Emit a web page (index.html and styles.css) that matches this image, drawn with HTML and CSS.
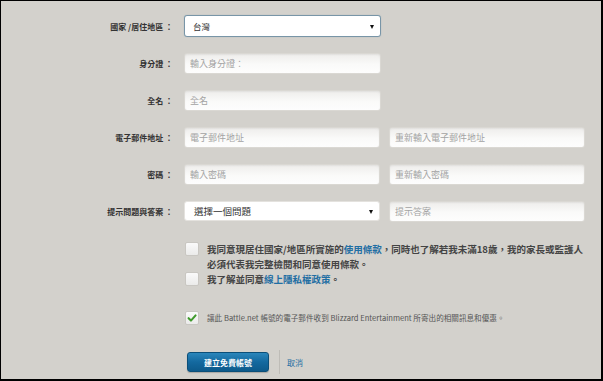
FILE: index.html
```html
<!DOCTYPE html>
<html lang="zh-Hant">
<head>
<meta charset="utf-8">
<title>建立帳號</title>
<link rel="stylesheet" href="styles.css">
</head>
<body>
<div class="frame">
  <form class="form">
    <div class="row">
      <label class="label">國家 /居住地區 ：</label>
      <div class="fields">
        <div class="select focus"><span class="select-text">台灣</span><span class="arrow"></span></div>
      </div>
    </div>
    <div class="row">
      <label class="label">身分證 ：</label>
      <div class="fields">
        <input class="input" type="text" placeholder="輸入身分證：">
      </div>
    </div>
    <div class="row">
      <label class="label">全名 ：</label>
      <div class="fields">
        <input class="input" type="text" placeholder="全名">
      </div>
    </div>
    <div class="row">
      <label class="label">電子郵件地址 ：</label>
      <div class="fields two">
        <input class="input" type="text" placeholder="電子郵件地址">
        <input class="input" type="text" placeholder="重新輸入電子郵件地址">
      </div>
    </div>
    <div class="row">
      <label class="label">密碼 ：</label>
      <div class="fields two">
        <input class="input" type="password" placeholder="輸入密碼">
        <input class="input" type="password" placeholder="重新輸入密碼">
      </div>
    </div>
    <div class="row">
      <label class="label">提示問題與答案 ：</label>
      <div class="fields two">
        <div class="select plain"><span class="select-text">選擇一個問題</span><span class="arrow"></span></div>
        <input class="input" type="text" placeholder="提示答案">
      </div>
    </div>

    <div class="checks">
      <div class="check-item">
        <span class="box"></span>
        <p class="check-text">我同意現居住國家/地區所實施的<a class="link">使用條款</a>，同時也了解若我未滿18歲，我的家長或監護人必須代表我完整檢閱和同意使用條款。</p>
      </div>
      <div class="check-item">
        <span class="box"></span>
        <p class="check-text">我了解並同意<a class="link">線上隱私權政策</a>。</p>
      </div>
      <div class="check-item small">
        <span class="box checked"><svg viewBox="0 0 14 14" width="14" height="14"><path d="M3 7.2 L5.8 10 L11.2 4" fill="none" stroke="#3f9a2c" stroke-width="2.4" stroke-linecap="round" stroke-linejoin="round"/></svg></span>
        <p class="check-text">讓此 Battle.net 帳號的電子郵件收到 Blizzard Entertainment 所寄出的相關訊息和優惠。</p>
      </div>
    </div>

    <div class="actions">
      <button type="button" class="btn">建立免費帳號</button>
      <span class="divider"></span>
      <a class="cancel">取消</a>
    </div>
  </form>
</div>
</body>
</html>
```
FILE: styles.css
```css
* { box-sizing: border-box; }
html, body {
  margin: 0;
  padding: 0;
  background: #d3d1cc;
}
body {
  font-family: "Noto Sans CJK TC", "Liberation Sans", sans-serif;
  color: #333;
}
.frame {
  width: 603px;
  height: 381px;
  border-style: solid;
  border-color: #000;
  border-width: 1px 2px 2px 1px;
  background: #d3d1cc;
  padding-top: 14px;
  overflow: hidden;
}
.form {
  display: flex;
  flex-direction: column;
}
.row {
  display: grid;
  grid-template-columns: 172px 1fr;
  column-gap: 11px;
  align-items: center;
  margin-bottom: 16px;
}
.label {
  text-align: right;
  font-size: 8px;
  font-weight: bold;
  color: #333;
  white-space: nowrap;
}
.fields {
  display: flex;
  gap: 9px;
}
.input {
  width: 197px;
  height: 21px;
  margin: 0;
  padding: 0 5px;
  border: 1px solid #dad8d3;
  border-radius: 3px;
  background: linear-gradient(to bottom, #eeedeb 0%, #fafaf9 55%, #fdfdfd 100%);
  box-shadow: inset 0 1px 2px rgba(0,0,0,0.06);
  font-family: "Noto Sans CJK TC", "Liberation Sans", sans-serif;
  font-size: 9px;
  color: #333;
  outline: none;
}
.two .input, .two .select { width: 196px; }
.input::placeholder { color: #a3a3a3; }
.select {
  width: 197px;
  height: 22px;
  border-radius: 3px;
  background: #fff;
  display: flex;
  align-items: center;
  justify-content: space-between;
  padding: 0 6px 0 8px;
  font-size: 9px;
  color: #333;
}
.select.focus {
  border: 1px solid #7895a7;
  box-shadow: 0 0 1px rgba(90,130,160,0.5);
}
.select.plain {
  height: 20px;
  border: 1px solid #e4e2de;
  padding-left: 9px;
}
.select-text { font-size: 9.5px; }
.select.focus .select-text { font-size: 8.5px; }
.arrow {
  width: 0;
  height: 0;
  border-left: 2.5px solid transparent;
  border-right: 2.5px solid transparent;
  border-top: 4px solid #111;
  margin-top: 1px;
}
.checks {
  margin-left: 184px;
  margin-top: 4px;
  display: flex;
  flex-direction: column;
}
.check-item {
  display: flex;
  align-items: flex-start;
  gap: 8px;
}
.check-item.small { margin-top: 24px; }
.box {
  flex: none;
  width: 14px;
  height: 14px;
  border: 1px solid #c9c7c2;
  border-radius: 2px;
  background: linear-gradient(to bottom, #fafafa, #ebebea);
  display: flex;
  align-items: center;
  justify-content: center;
}
.box.checked svg { display: block; }
.check-text {
  margin: 0;
  font-size: 9.5px;
  line-height: 15px;
  font-weight: bold;
  color: #444;
  width: 380px;
}
.small .check-text {
  font-size: 7.6px;
  line-height: 14px;
  font-weight: normal;
  color: #555;
}
.link { color: #1f6ea3; }
.actions {
  margin-left: 186px;
  margin-top: 25px;
  display: flex;
  align-items: center;
}
.btn {
  width: 82px;
  height: 20px;
  padding: 0;
  border: 1px solid #0b4f79;
  border-radius: 3px;
  background: linear-gradient(to bottom, #2a86bb 0%, #14699f 50%, #0d5a8b 100%);
  box-shadow: 0 1px 1px rgba(0,0,0,0.2);
  color: #fff;
  font-family: "Noto Sans CJK TC", "Liberation Sans", sans-serif;
  font-size: 8px;
  font-weight: bold;
}
.divider {
  width: 1px;
  height: 24px;
  background: #bebcb7;
  margin-left: 10px;
  margin-right: 7px;
}
.cancel {
  font-size: 8px;
  color: #1f6ea3;
}
```
